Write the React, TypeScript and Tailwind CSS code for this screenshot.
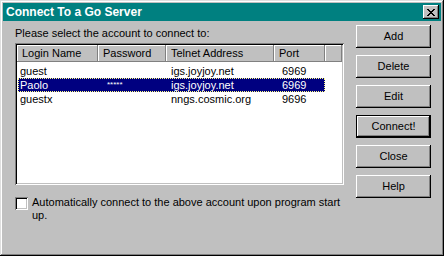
const accounts = [
  { login: "guest", password: "", address: "igs.joyjoy.net", port: "6969" },
  { login: "Paolo", password: "*****", address: "igs.joyjoy.net", port: "6969", selected: true },
  { login: "guestx", password: "", address: "nngs.cosmic.org", port: "9696" },
];

const buttons = ["Add", "Delete", "Edit", "Connect!", "Close", "Help"];

const columns = [
  { label: "Login Name", w: "w-[81px]" },
  { label: "Password", w: "w-[68px]" },
  { label: "Telnet Address", w: "w-[108px]" },
  { label: "Port", w: "w-[51px]" },
];

function WinButton({ label }: { label: string }) {
  const isDefault = label === "Connect!";
  return (
    <div
      className={
        "w-[75px] h-[23px] flex items-center justify-center bg-[#c0c0c0] text-[11px] text-black " +
        (isDefault
          ? "border border-black shadow-[inset_-1px_-1px_#000,inset_1px_1px_#fff,inset_-2px_-2px_#808080]"
          : "shadow-[inset_-1px_-1px_#000,inset_1px_1px_#fff,inset_-2px_-2px_#808080]")
      }
    >
      {label}
    </div>
  );
}

export default function App() {
  return (
    <div className="w-[444px] h-[256px] bg-[#c0c0c0] p-[3px] font-['Liberation_Sans',Arial,sans-serif] shadow-[inset_-1px_-1px_#000,inset_1px_1px_#dfdfdf,inset_-2px_-2px_#808080,inset_2px_2px_#fff] flex flex-col">
      {/* Title bar */}
      <div className="h-[18px] bg-[#008080] flex items-center justify-between pl-[3px] pr-[2px]">
        <span className="text-white font-bold text-[12px] leading-none">Connect To a Go Server</span>
        <div className="w-[16px] h-[14px] bg-[#c0c0c0] flex items-center justify-center shadow-[inset_-1px_-1px_#000,inset_1px_1px_#fff,inset_-2px_-2px_#808080]">
          <svg width="8" height="7" viewBox="0 0 8 7" shapeRendering="crispEdges">
            <path d="M0 0h2v1h-2zM6 0h2v1h-2zM1 1h2v1h-2zM5 1h2v1h-2zM2 2h4v1h-4zM3 3h2v1h-2zM2 4h4v1h-4zM1 5h2v1h-2zM5 5h2v1h-2zM0 6h2v1h-2zM6 6h2v1h-2z" fill="#000" />
          </svg>
        </div>
      </div>

      <div className="flex pl-[12px] pt-[4px]">
        {/* Left column */}
        <div className="flex flex-col w-[329px]">
          <div className="text-[11px] leading-[13px] text-black h-[18px] pt-[2px]">
            Please select the account to connect to:
          </div>
          <div className="h-[142px] bg-white p-[2px] shadow-[inset_1px_1px_#808080,inset_-1px_-1px_#fff,inset_2px_2px_#000,inset_-2px_-2px_#c0c0c0]">
            <div className="flex h-[17px]">
              {columns.map((c) => (
                <div
                  key={c.label}
                  className={c.w + " h-full bg-[#c0c0c0] text-[11px] text-black flex items-center pl-[5px] shadow-[inset_-1px_-1px_#808080,inset_1px_1px_#fff]"}
                >
                  {c.label}
                </div>
              ))}
              <div className="flex-1 h-full bg-[#c0c0c0] shadow-[inset_-1px_-1px_#808080,inset_1px_1px_#fff]" />
            </div>
            <div className="pt-[2px] pl-[1px]">
              {accounts.map((a) => (
                <div
                  key={a.login}
                  className={
                    "flex h-[14px] items-center text-[11px] w-[307px] " +
                    (a.selected
                      ? "bg-[#000080] text-white outline outline-1 outline-dotted outline-[#ffff80] -outline-offset-1"
                      : "text-black")
                  }
                >
                  <span className="w-[81px] pl-[2px]">{a.login}</span>
                  <span className="w-[68px] pl-[8px] text-[8px]">{a.password}</span>
                  <span className="w-[108px] pl-[4px]">{a.address}</span>
                  <span className="flex-1 pl-[7px]">{a.port}</span>
                </div>
              ))}
            </div>
          </div>

          <div className="flex items-start mt-[11px]">
            <div className="w-[13px] h-[13px] bg-white shrink-0 mt-[1px] shadow-[inset_1px_1px_#808080,inset_-1px_-1px_#fff,inset_2px_2px_#000,inset_-2px_-2px_#c0c0c0]" />
            <div className="ml-[4px] text-[11px] leading-[13px] text-black">
              Automatically connect to the above account upon program start up.
            </div>
          </div>
        </div>

        {/* Right column */}
        <div className="flex flex-col gap-[7px] ml-[12px]">
          {buttons.map((b) => (
            <WinButton key={b} label={b} />
          ))}
        </div>
      </div>
    </div>
  );
}
